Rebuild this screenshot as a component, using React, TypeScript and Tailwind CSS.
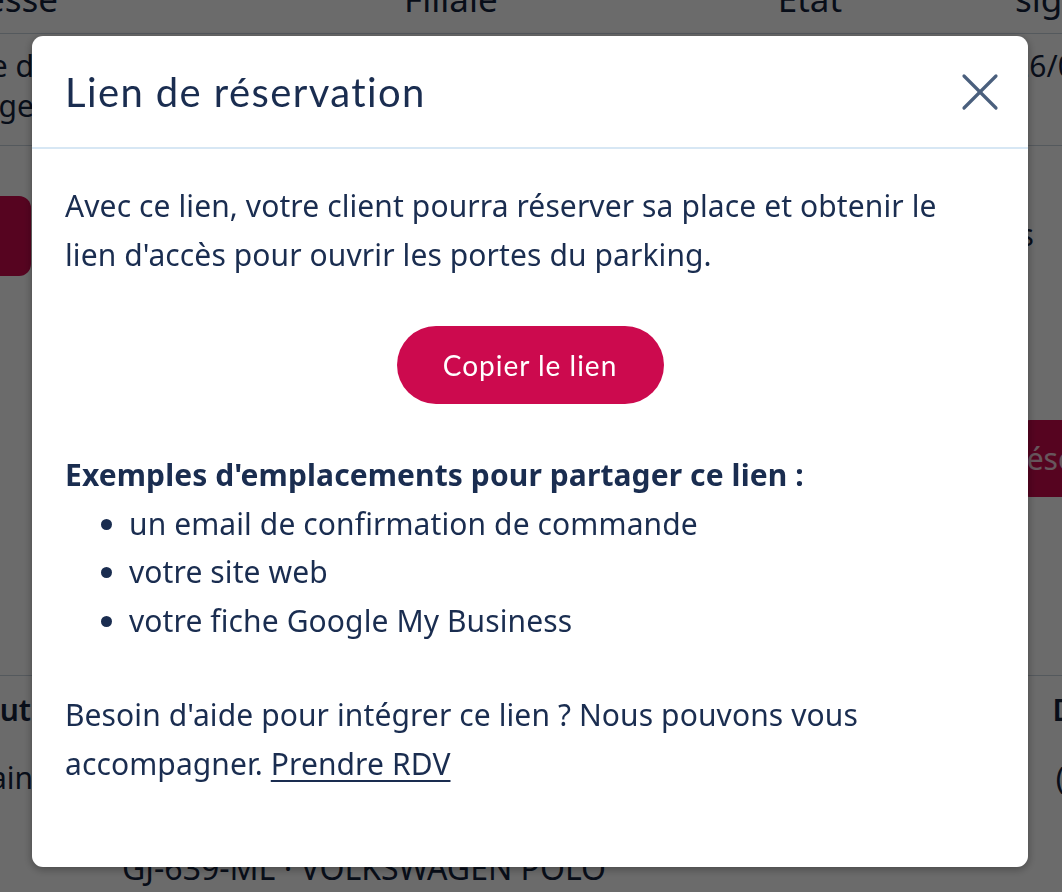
import { X } from "lucide-react";

function PageBehind() {
  return (
    <div className="w-[1062px] h-[892px] overflow-hidden bg-white text-[#14233d] font-['Noto_Sans',sans-serif] text-[30px]">
      <div className="-mt-[19px] h-[53px] flex text-[35px] leading-[35px] border-b border-[#c9d3de]">
        <div className="w-[58px] flex justify-end">
          <span className="whitespace-nowrap">Adresse</span>
        </div>
        <span className="ml-[346px]">Filiale</span>
        <span className="ml-[280px]">Etat</span>
        <span className="ml-[173px] whitespace-nowrap">signature</span>
      </div>
      <div className="h-[112px] flex justify-between border-b border-[#c9d3de] leading-[40px] pt-[12px]">
        <div className="w-[34px] flex flex-col items-end">
          <p className="whitespace-nowrap">Rue d</p>
          <p className="whitespace-nowrap">Bourge</p>
        </div>
        <p className="mr-[-30px] whitespace-nowrap">26/05</p>
      </div>
      <div className="flex justify-between pt-[50px]">
        <div className="-ml-[20px] w-[51px] h-[80px] rounded-xl bg-[#cc0a4e]" />
        <p className="mt-[24px] mr-[28px] leading-[30px]">Options</p>
      </div>
      <div className="flex justify-end mt-[144px]">
        <div className="w-[60px] h-[77px] mr-[-16px] rounded-l-xl bg-[#cc0a4e] text-white/80 flex items-center overflow-hidden">
          <span className="-ml-[10px] whitespace-nowrap">Réserver</span>
        </div>
      </div>
      <div className="mt-[178px] border-t border-[#c9d3de] pt-[14px] flex justify-between font-semibold leading-[40px]">
        <div className="w-[31px] flex justify-end">
          <span className="whitespace-nowrap">Statut</span>
        </div>
        <span className="mr-[-30px]">Da</span>
      </div>
      <div className="flex justify-between mt-[28px] leading-[40px]">
        <div className="w-[50px] flex justify-end">
          <span className="whitespace-nowrap">Domaine</span>
        </div>
        <span className="mr-[-20px]">(2</span>
      </div>
      <p className="ml-[122px] mt-[50px] text-[32px] leading-[40px] whitespace-nowrap">GJ-639-ML · VOLKSWAGEN POLO</p>
    </div>
  );
}

function BookingLinkModal() {
  return (
    <div className="fixed inset-0 bg-black/[0.58]">
      <div className="ml-[32px] mt-[36px] w-[996px] h-[831px] rounded-[11px] bg-white shadow-[0_2px_10px_rgba(0,0,0,0.35)] overflow-hidden">
        <div className="h-[113px] flex items-center justify-between pl-[33px] pr-[16px] border-b-2 border-[#d7e7f4]">
          <h2 className="text-[40px] text-[#1a2d50] font-['Lato',sans-serif] tracking-[1.4px]">
            Lien de réservation
          </h2>
          <button className="text-[#4a5f7d]">
            <X size={64} strokeWidth={1.2} />
          </button>
        </div>

        <div className="pl-[33px] pr-[50px] pt-[33px] text-[30px] leading-[48.5px] tracking-[0.1px] text-[#1a2d50] font-['Noto_Sans',sans-serif]">
          <p>
            Avec ce lien, votre client pourra réserver sa place et obtenir le lien d'accès pour ouvrir les portes
            du parking.
          </p>

          <div className="flex justify-center mt-[47px] ml-[17px]">
            <button className="w-[267px] h-[78px] rounded-full bg-[#cc0a4e] text-white text-[28px] tracking-[1px] font-['Lato',sans-serif]">
              Copier le lien
            </button>
          </div>

          <p className="mt-[47px] font-bold">Exemples d'emplacements pour partager ce lien :</p>
          <ul className="list-disc pl-[64px]">
            <li>un email de confirmation de commande</li>
            <li>votre site web</li>
            <li>votre fiche Google My Business</li>
          </ul>

          <p className="mt-[46px]">
            Besoin d'aide pour intégrer ce lien ? Nous pouvons vous accompagner.{" "}
            <a href="#" className="underline decoration-[1.5px] underline-offset-[5px]">
              Prendre RDV
            </a>
          </p>
        </div>
      </div>
    </div>
  );
}

export default function App() {
  return (
    <div className="relative w-[1062px] h-[892px] overflow-hidden">
      <PageBehind />
      <BookingLinkModal />
    </div>
  );
}
